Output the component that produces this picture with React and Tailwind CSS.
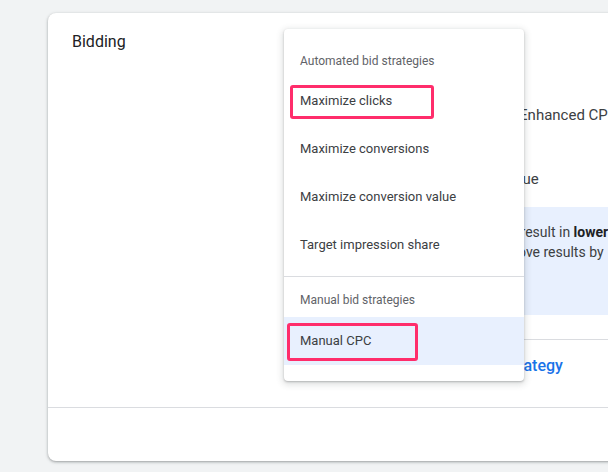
import React from "react";

const automated = [
  "Maximize clicks",
  "Maximize conversions",
  "Maximize conversion value",
  "Target impression share",
];

const BidStrategyMenu = () => (
  <div className="absolute left-[236px] top-[16px] w-[240px] rounded-[4px] bg-white pb-4 shadow-[0_2px_6px_2px_rgba(60,64,67,0.15),0_1px_2px_0_rgba(60,64,67,0.3)]">
    {/* automated group */}
    <div className="pb-[7px]">
      <div className="px-4 pt-6 pb-2 text-[12px] leading-4 text-[#5f6368]">Automated bid strategies</div>
      {automated.map((item, i) => (
        <div key={item} className="relative flex h-12 items-center px-4 text-[13px] text-[#3c4043]">
          {item}
          {i === 0 && (
            <span className="absolute left-[6px] top-[8px] h-[34px] w-[144px] rounded-[3px] border-[3px] border-[#ff2d6b]"></span>
          )}
        </div>
      ))}
    </div>
    <div className="border-t border-[#dadce0]"></div>
    {/* manual group */}
    <div className="px-4 pt-[15px] pb-[9px] text-[12px] leading-4 text-[#5f6368]">Manual bid strategies</div>
    <div className="relative flex h-12 items-center bg-[#e8f0fe] px-4 text-[13px] text-[#3c4043]">
      Manual CPC
      <span className="absolute left-[3px] top-[6px] h-[38px] w-[131px] rounded-[3px] border-[3px] border-[#ff2d6b]"></span>
    </div>
  </div>
);

const App = () => {
  return (
    <div className="h-[472px] w-[608px] overflow-hidden bg-[#f1f3f4] pt-[13px] pl-[48px] font-['Roboto',sans-serif]">
      <div className="relative w-[620px] rounded-lg bg-white shadow-[0_1px_2px_0_rgba(60,64,67,0.3),0_1px_3px_1px_rgba(60,64,67,0.15)]">
        {/* top section */}
        <div className="flex h-[395px] border-b border-[#dadce0]">
          <div className="w-[252px] shrink-0 pl-6 pt-[17px]">
            <h2 className="text-[16px] leading-6 text-[#202124]">Bidding</h2>
          </div>
          <div className="flex-1 overflow-hidden pr-6 whitespace-nowrap text-[#3c4043]">
            <div className="mt-[92px] ml-[8px] text-[15px] leading-5">Help increase conversions with Enhanced CPC</div>
            <div className="mt-[44px] ml-[41px] text-[15px] leading-5">Optimize for conversion value</div>
            <div className="mt-[18px] bg-[#e8f0fe] py-[15px] text-[14px] leading-5 text-[#3c4043]">
              <div className="ml-[99px]">Enhanced CPC can result in <span className="font-bold text-[#202124]">lower costs</span></div>
              <div className="ml-[137px]">and can improve results by</div>
              <div className="h-[38px]"></div>
            </div>
            <div className="mt-[24px] border-t border-[#dadce0] pt-[14px]">
              <span className="ml-[120px] text-[16px] font-medium leading-6 text-[#1a73e8]">Change bid strategy</span>
            </div>
          </div>
        </div>
        {/* bottom section */}
        <div className="h-[53px]"></div>
        <BidStrategyMenu />
      </div>
    </div>
  );
};

export default App;
